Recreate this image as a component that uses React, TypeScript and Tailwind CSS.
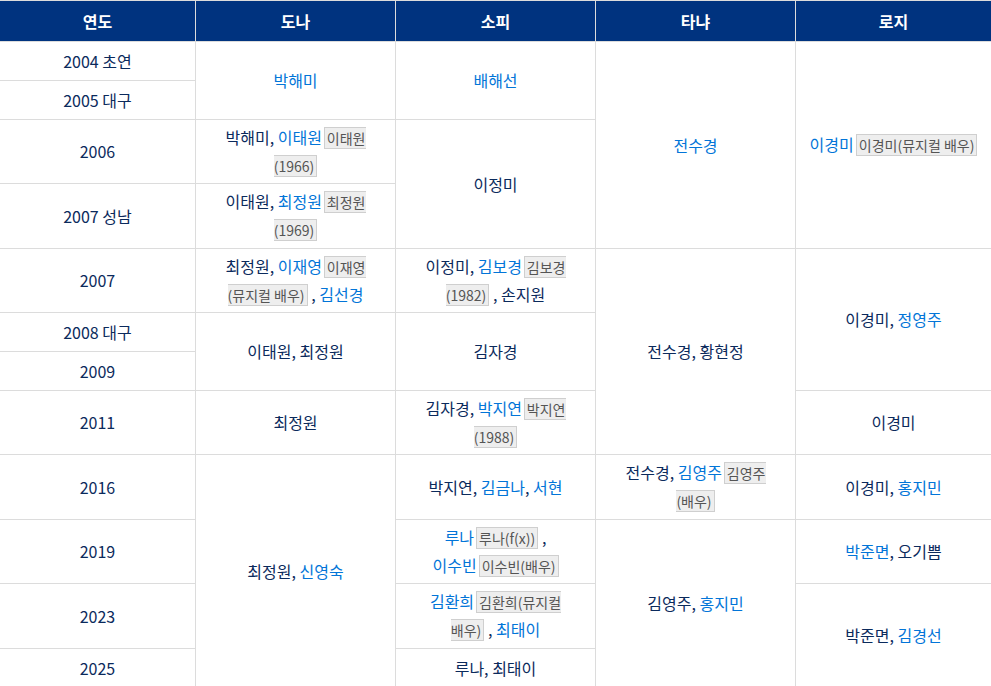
import React from "react";

const L = ({ children }: { children: React.ReactNode }) => (
  <span className="text-[#0275d8]">{children}</span>
);

const N = ({ children }: { children: React.ReactNode }) => (
  <span className="ml-[2px] border border-[#cfcfcf] bg-[#eeeeee] px-[2px] py-0 text-[14px] text-[#555]">
    {children}
  </span>
);

const Cell = ({
  className = "",
  children,
}: {
  className?: string;
  children?: React.ReactNode;
}) => (
  <div className={`flex items-center justify-center bg-white px-2 text-center ${className}`}>
    <div className="whitespace-nowrap leading-[27px]">{children}</div>
  </div>
);

const H = ({ children }: { children: React.ReactNode }) => (
  <div className="flex items-center justify-center bg-[#00337f] text-[16px] font-bold text-white">
    {children}
  </div>
);

export default function App() {
  return (
    <div
      className="h-[686px] w-[991px] overflow-hidden bg-white text-[16px] text-[#0b2a5c]"
      style={{ fontFamily: '"Noto Sans CJK KR", "Noto Sans", sans-serif' }}
    >
      <div className="grid grid-cols-[195px_199px_199px_199px_195px] grid-rows-[40px_38px_38px_63px_64px_63px_38px_38px_63px_64px_63px_64px_38px] gap-px bg-[#dcdcdc] pt-px">
        <H>연도</H>
        <H>도나</H>
        <H>소피</H>
        <H>타냐</H>
        <H>로지</H>

        {/* year column */}
        <Cell className="col-start-1 row-start-2">2004 초연</Cell>
        <Cell className="col-start-1 row-start-3">2005 대구</Cell>
        <Cell className="col-start-1 row-start-4">2006</Cell>
        <Cell className="col-start-1 row-start-5">2007 성남</Cell>
        <Cell className="col-start-1 row-start-6">2007</Cell>
        <Cell className="col-start-1 row-start-7">2008 대구</Cell>
        <Cell className="col-start-1 row-start-8">2009</Cell>
        <Cell className="col-start-1 row-start-9">2011</Cell>
        <Cell className="col-start-1 row-start-10">2016</Cell>
        <Cell className="col-start-1 row-start-11">2019</Cell>
        <Cell className="col-start-1 row-start-12">2023</Cell>
        <Cell className="col-start-1 row-start-13">2025</Cell>

        {/* 도나 */}
        <Cell className="col-start-2 row-start-2 row-span-2">
          <L>박해미</L>
        </Cell>
        <Cell className="col-start-2 row-start-4">
          박해미, <L>이태원</L>
          <N>
            이태원
            <br />
            (1966)
          </N>
        </Cell>
        <Cell className="col-start-2 row-start-5">
          이태원, <L>최정원</L>
          <N>
            최정원
            <br />
            (1969)
          </N>
        </Cell>
        <Cell className="col-start-2 row-start-6">
          최정원, <L>이재영</L>
          <N>
            이재영
            <br />
            (뮤지컬 배우)
          </N>{" "}
          , <L>김선경</L>
        </Cell>
        <Cell className="col-start-2 row-start-7 row-span-2">이태원, 최정원</Cell>
        <Cell className="col-start-2 row-start-9">최정원</Cell>
        <Cell className="col-start-2 row-start-10 row-span-4">
          최정원, <L>신영숙</L>
        </Cell>

        {/* 소피 */}
        <Cell className="col-start-3 row-start-2 row-span-2">
          <L>배해선</L>
        </Cell>
        <Cell className="col-start-3 row-start-4 row-span-2">이정미</Cell>
        <Cell className="col-start-3 row-start-6">
          이정미, <L>김보경</L>
          <N>
            김보경
            <br />
            (1982)
          </N>{" "}
          , 손지원
        </Cell>
        <Cell className="col-start-3 row-start-7 row-span-2">김자경</Cell>
        <Cell className="col-start-3 row-start-9">
          김자경, <L>박지연</L>
          <N>
            박지연
            <br />
            (1988)
          </N>
        </Cell>
        <Cell className="col-start-3 row-start-10">
          박지연, <L>김금나</L>, <L>서현</L>
        </Cell>
        <Cell className="col-start-3 row-start-11">
          <L>루나</L>
          <N>루나(f(x))</N> ,
          <br />
          <L>이수빈</L>
          <N>이수빈(배우)</N>
        </Cell>
        <Cell className="col-start-3 row-start-12">
          <L>김환희</L>
          <N>
            김환희(뮤지컬
            <br />
            배우)
          </N>{" "}
          , <L>최태이</L>
        </Cell>
        <Cell className="col-start-3 row-start-13">루나, 최태이</Cell>

        {/* 타냐 */}
        <Cell className="col-start-4 row-start-2 row-span-4">
          <L>전수경</L>
        </Cell>
        <Cell className="col-start-4 row-start-6 row-span-4">전수경, 황현정</Cell>
        <Cell className="col-start-4 row-start-10">
          전수경, <L>김영주</L>
          <N>
            김영주
            <br />
            (배우)
          </N>
        </Cell>
        <Cell className="col-start-4 row-start-11 row-span-3">
          김영주, <L>홍지민</L>
        </Cell>

        {/* 로지 */}
        <Cell className="col-start-5 row-start-2 row-span-4">
          <L>이경미</L>
          <N>이경미(뮤지컬 배우)</N>
        </Cell>
        <Cell className="col-start-5 row-start-6 row-span-3">
          이경미, <L>정영주</L>
        </Cell>
        <Cell className="col-start-5 row-start-9">이경미</Cell>
        <Cell className="col-start-5 row-start-10">
          이경미, <L>홍지민</L>
        </Cell>
        <Cell className="col-start-5 row-start-11">
          <L>박준면</L>, 오기쁨
        </Cell>
        <Cell className="col-start-5 row-start-12 row-span-2">
          박준면, <L>김경선</L>
        </Cell>
      </div>
    </div>
  );
}
